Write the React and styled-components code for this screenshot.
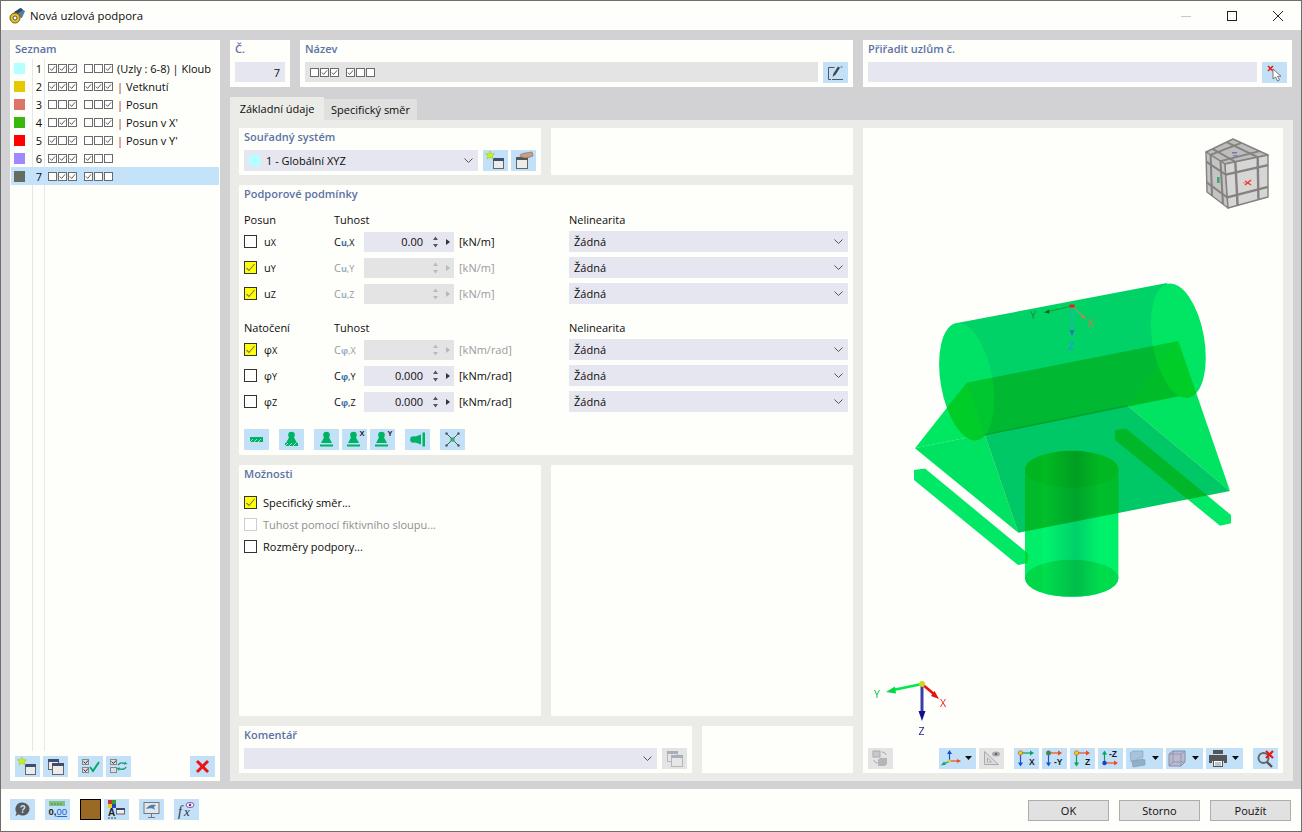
import React from "react";
import styled, { createGlobalStyle } from "styled-components";

const Global = createGlobalStyle`
  html, body { margin: 0; padding: 0; background: #fff; }
  body { font-family: "Open Sans", "Noto Sans", "Liberation Sans", sans-serif; font-size: 11px; color: #0c0c0c; }
  * { box-sizing: border-box; }
`;

const WHITE = "#fefefb";
const BTN = "#c2e1f8";

const Window = styled.div`
  width: 1302px; height: 832px; display: flex; flex-direction: column;
  border: 1px solid #6e6e6e; background: ${WHITE}; overflow: hidden;
`;
const TitleBar = styled.header`
  height: 29px; flex: none; display: flex; align-items: center; padding-left: 8px; gap: 4px;
  font-size: 11.4px; background: ${WHITE};
`;
const WindowControls = styled.div`
  margin-left: auto; display: flex; align-items: center; height: 100%;
`;
const WinCtl = styled.div`
  width: 46px; height: 100%; display: flex; align-items: center; justify-content: center;
`;
const Main = styled.main`
  flex: 1; min-height: 0; background: #d2d2d4; padding: 10px 8px 8px 9px;
  display: grid; grid-template-columns: 210px 1fr; gap: 10px;
`;
const ListPanel = styled.section`
  background: ${WHITE}; display: flex; flex-direction: column; padding: 0 1px 4px;
`;
const Heading = styled.h3`
  margin: 0; height: 19px; line-height: 17px; padding: 0 ${p => p.$pad ?? 5}px; font-size: 11px; font-weight: 600; color: #5c72a3; flex: none;
`;
const ListBody = styled.div`
  flex: 1; display: flex; flex-direction: column;
  background-image: linear-gradient(#e6e6e6, #e6e6e6), linear-gradient(#e6e6e6, #e6e6e6);
  background-size: 1px 100%, 1px 100%;
  background-position: 21px 0, 33px 0;
  background-repeat: no-repeat;
`;
const ListRow = styled.div`
  height: 18px; display: flex; align-items: center; padding-left: 3px; flex: none;
  background: ${p => (p.$selected ? "#c4e3fa" : "transparent")};
`;
const Swatch = styled.span`
  width: 11px; height: 11px; flex: none; background: ${p => p.$c};
`;
const RowNum = styled.span`
  width: 17px; text-align: right; margin-right: 6px; flex: none;
`;
const MiniGroup = styled.span`
  display: inline-flex; gap: 1px; margin-right: ${p => p.$mr ?? 7}px;
`;
const Mini = styled.span`
  width: 9px; height: 9px; border: 1px solid #6b6b6b; display: inline-flex; align-items: center; justify-content: center; background: #fff;
`;
const RowText = styled.span` white-space: nowrap; `;
const Pipe = styled.span` color: #a0142c; `;
const ListTools = styled.div`
  display: flex; gap: 10px; padding: 5px 4px 0 4px; flex: none;
`;
const Group = styled.div`
  display: flex; gap: ${p => p.$gap ?? 3}px; margin-left: ${p => (p.$push ? "auto" : "0")}; margin-right: ${p => (p.$pushRight ? "auto" : "0")};
`;
const Btn = styled.div`
  width: ${p => (p.$wide ? 37 : 25)}px; height: 21px; flex: none; background: ${p => (p.$off ? "#e4e4e4" : BTN)};
  display: flex; align-items: center;
  svg { opacity: ${p => (p.$dim ? 0.35 : 1)}; }
`;
const Right = styled.div` display: flex; flex-direction: column; min-width: 0; `;
const TopRow = styled.div`
  display: grid; grid-template-columns: 60px 553px 429px; gap: 10px; height: 47px; flex: none;
`;
const Panel = styled.section`
  background: ${WHITE}; min-width: 0; min-height: 0;
`;
const FieldRow = styled.div`
  display: flex; gap: 5px; padding: 3px 5px 0;
`;
const TextField = styled.div`
  flex: 1; height: 20px; background: ${p => (p.$off ? "#e4e4e4" : "#e6e6f1")}; display: flex; align-items: center;
  justify-content: ${p => (p.$right ? "flex-end" : "flex-start")}; padding: 0 5px;
`;
const Tabs = styled.div`
  margin-top: 10px; height: 23px; display: flex; align-items: flex-end; flex: none;
`;
const Tab = styled.div`
  height: ${p => (p.$active ? 23 : 21)}px; width: ${p => (p.$active ? 94 : 93)}px; display: flex; align-items: center; justify-content: center;
  background: ${p => (p.$active ? "#ebebe7" : "#e0e0e0")}; font-size: 11px;
`;
const TabBody = styled.div`
  flex: 1; min-height: 0; background: #ebebe7; padding: 8px 10px 8px 9px;
  display: grid; grid-template-columns: 302px 302px 420px; grid-template-rows: 47px 270px 251px 47px; gap: 10px;
`;
const ViewPanel = styled(Panel)`
  grid-column: 3; grid-row: 1 / -1; display: flex; flex-direction: column;
`;
const WidePanel = styled(Panel)` grid-column: 1 / 3; `;
const BottomSplit = styled.div`
  grid-column: 1 / 3; display: grid; grid-template-columns: 453px 151px; gap: 10px;
`;
const Select = styled.div`
  flex: ${p => (p.$fill ? 1 : "none")}; width: ${p => (p.$w ? p.$w + "px" : "auto")}; height: 21px; background: #e6e6f1; display: flex; align-items: center; padding: 0 5px; gap: 6px;
`;
const SelectLabel = styled.span` flex: 1; `;
const SysSwatch = styled.span`
  width: 11px; height: 11px; background: #b4ffff; flex: none;
`;
const CondBlock = styled.div`
  display: grid; grid-template-columns: 90px 30px 90px 115px 279px; grid-template-rows: 16px repeat(3, 26px); margin: ${p => p.$mt}px 0 0 5px;
`;
const CondHead = styled.div`
  height: 16px; line-height: 15px; grid-column: ${p => p.$col};
`;
const Cell = styled.div`
  display: flex; align-items: center; height: 21px; margin-top: 3px; gap: 7px;
  color: ${p => (p.$off ? "#9b9b9b" : "#0c0c0c")};
`;
const Box = styled.span`
  width: 13px; height: 13px; flex: none; border: 1px solid ${p => (p.$off ? "#cfcfcf" : "#333")};
  background: ${p => (p.$on ? "#ffff00" : "#fff")}; display: inline-flex; align-items: center; justify-content: center;
`;
const Sub = styled.span`
  font-size: 9px; line-height: 1;
  color: ${p => p.$c || "inherit"}; font-weight: ${p => (p.$b ? 700 : 400)};
`;
const Sym = styled.span` display: inline-flex; align-items: baseline; `;
const Num = styled.div`
  width: 90px; height: 20px; background: ${p => (p.$off ? "#e4e4e4" : "#e6e6f1")}; display: flex; align-items: center; justify-content: flex-end; padding-right: 4px; gap: 5px;
`;
const Unit = styled.span` padding-left: 5px; `;
const SupportTools = styled.div`
  display: flex; gap: 10px; margin: 15px 0 0 5px;
`;
const OptionList = styled.div`
  margin: 7px 0 0 5px;
`;
const Option = styled.div`
  height: 22px; display: flex; align-items: center; gap: 6px; color: ${p => (p.$off ? "#8f8f8f" : "#0c0c0c")};
`;
const Canvas = styled.svg`
  display: block; flex: none; isolation: isolate;
`;
const Mul = styled.g` mix-blend-mode: multiply; `;
const ViewTools = styled.div`
  display: flex; gap: 10px; padding: 5px 5px 0; justify-content: flex-end;
`;
const Footer = styled.footer`
  height: 42px; flex: none; display: flex; padding: 10px 10px 0 9px; background: ${WHITE}; gap: 10px;
`;
const ColorBox = styled.div`
  width: 21px; height: 21px; background: #9a6a25; border: 1px solid #000; flex: none;
`;
const Actions = styled.div`
  margin-left: auto; display: flex; gap: 10px; padding-top: 1px;
`;
const Action = styled.div`
  width: 81px; height: 21px; background: #e1e1e1; border: 1px solid #adadad; display: flex; align-items: center; justify-content: center; font-size: 11px;
`;

const Ic = ({ children }) => <svg width="25" height="21" viewBox="0 0 25 21" style={{ flex: "none" }}>{children}</svg>;
const Caret = () => <svg width="12" height="21" viewBox="0 0 12 21" style={{ flex: "none" }}><path d="M1 8h7l-3.500 4z" fill="#111" /></svg>;
const Tick = ({ s = 7, c = "#444" }) => <svg width={s} height={s} viewBox="0 0 8 8"><path d="M1 4l2 2.200L7 1.500" fill="none" stroke={c} strokeWidth="1" /></svg>;
const BigTick = () => <svg width="11" height="11" viewBox="0 0 11 11"><path d="M1.500 6l2.500 2.500L9.500 2" fill="none" stroke="#777" strokeWidth="1.100" /></svg>;
const Chevron = () => <svg width="9" height="5" viewBox="0 0 9 5" style={{ flex: "none" }}><path d="M.5.5l4 4 4-4" fill="none" stroke="#555" /></svg>;
const Spin = ({ off }) => {
  const c = off ? "#b9b9b9" : "#333";
  return <svg width="22" height="14" viewBox="0 0 22 14"><path d="M5 5l2.500-3.500L10 5zM5 9l2.500 3.500L10 9z" fill={off ? "#bbb" : "#555"} /><path d="M18 4l4 3-4 3z" fill={c} /></svg>;
};

const Win = ({ x = 10, y = 8, w = 10, h = 10, bar = "#3e4d70" }) => (
  <g><rect x={x + .5} y={y + .5} width={w} height={h} fill="#ececec" stroke="#666" /><rect x={x} y={y} width={w + 1} height="3" fill={bar} /></g>
);
const IconNew = () => <Ic><Win /><path d="M7 1l1.300 3 3.200-.3-2.300 2.200 1.200 3-3.400-1.600-3.100 1.700 1-3.200L2.500 3.600l3.200.2z" fill="#c9f21c" stroke="#9cbf10" strokeWidth=".5" /></Ic>;
const IconCopy = () => <Ic><Win x={5} y={3} w={10} h={10} /><Win x={9} y={7} w={11} h={11} /></Ic>;
const IconCheckAll = () => (
  <Ic>
    <rect x="4.500" y="3.500" width="6" height="5" fill="#ddd" stroke="#888" /><rect x="4.500" y="11.500" width="6" height="5" fill="#ddd" stroke="#888" />
    <path d="M5.500 5.500l2 2 2.500-3M5.500 13.500l2 2 2.500-3" fill="none" stroke="#333" />
    <path d="M12 11l3 4 6-9" fill="none" stroke="#0aa868" strokeWidth="2" />
  </Ic>
);
const IconCheckSwap = () => (
  <Ic>
    <rect x="4.500" y="3.500" width="6" height="5" fill="#ddd" stroke="#888" /><rect x="4.500" y="11.500" width="6" height="5" fill="#ddd" stroke="#888" />
    <path d="M5.500 5.500l2 2 2.500-3" fill="none" stroke="#333" />
    <path d="M12 9c2-2.500 5-2.500 7-1M20 11c-1 2.500-5 3-7 1.500" fill="none" stroke="#1c9e6b" strokeWidth="1.500" />
    <path d="M19 5.500l2.500 2.500-3.500.5zM13 15l-2.500-3 3.500-.5z" fill="#1c9e6b" />
  </Ic>
);
const IconDel = () => <Ic><path d="M7 5l11 11M18 5L7 16" stroke="#ee1414" strokeWidth="3" /></Ic>;
const IconEdit = () => (
  <Ic>
    <path d="M11.500 5.500H5.500V17.500H8M9 17.500H20" fill="none" stroke="#555" />
    <path d="M9.500 15l1-3.500 4.500-7 2 1.300-4.500 7z" fill="#444" />
    <path d="M17.500 5h2" stroke="#666" />
  </Ic>
);
const IconPick = () => (
  <Ic>
    <path d="M6 4l5 5M11 4l-5 5" stroke="#ee2020" strokeWidth="1.600" />
    <path d="M11 7v10l2.500-2 2 4 2-1-2-3.800h3.500z" fill="#fff" stroke="#777" />
  </Ic>
);
const IconHand = () => (
  <Ic>
    <Win x={5} y={7} w={11} h={11} bar="#555" />
    <path d="M9 5c3-2.500 7-2 12-3l1 4c-3 1-5 2-7 2-3 0-6-1-6-3z" fill="#c99d82" stroke="#6f5b50" strokeWidth=".5" />
  </Ic>
);
const G = "#00b265";
const Pin = ({ dx = 0 }) => (
  <g transform={`translate(${dx} 0)`}><circle cx="12.500" cy="6" r="3.300" fill={G} /><path d="M10.500 7.500h4l3.500 6.500H7z" fill={G} /></g>
);
const Hatch = ({ x = 6, y = 15, w = 13 }) => (
  <g><rect x={x} y={y} width={w} height="3" fill={G} /><path d={`M${x} ${y + 3}l3-3M${x + 4} ${y + 3}l3-3M${x + 8} ${y + 3}l3-3`} stroke="#bff0d8" strokeWidth=".8" /></g>
);
const IconS1 = () => <Ic><rect x="6" y="8" width="13" height="2.500" fill={G} /><Hatch y={10} /></Ic>;
const IconS2 = () => <Ic><Pin /><Hatch y={14} /></Ic>;
const IconS3 = () => <Ic><Pin /><rect x="6" y="15.500" width="13" height="2" fill={G} /></Ic>;
const AxisSup = ({ t }) => <text x="17.500" y="7" fontSize="7.500" fontWeight="700" fontFamily="Liberation Sans" fill="#222">{t}</text>;
const IconS4 = () => <Ic><Pin dx={-1} /><rect x="5" y="15.500" width="13" height="2" fill={G} /><AxisSup t="X" /></Ic>;
const IconS5 = () => <Ic><Pin dx={-1} /><rect x="5" y="15.500" width="13" height="2" fill={G} /><AxisSup t="Y" /></Ic>;
const IconS6 = () => <Ic><rect x="17.500" y="3.500" width="2.500" height="14" fill={G} /><circle cx="8.500" cy="10.500" r="3.300" fill={G} /><path d="M9 8l7-2.500v10L9 13z" fill={G} /></Ic>;
const IconS7 = () => (
  <Ic>
    <path d="M7 5l11 11M18 5L7 16" stroke="#555" />
    {[[6.500, 4.500], [18.500, 4.500], [6.500, 16.500], [18.500, 16.500]].map(([x, y]) => <circle key={x + "-" + y} cx={x} cy={y} r="1.200" fill="#555" />)}
    <rect x="10.500" y="8.500" width="4" height="4" fill="#3aa860" />
  </Ic>
);
const IconHelp = () => (
  <Ic>
    <path d="M12.500 3.500a7 6.500 0 1 1-4 11.800l-3 2 1-3.800a6.500 6.500 0 0 1 6-10z" fill="#5a5a5a" />
    <text x="12.700" y="14" textAnchor="middle" fontSize="10" fontWeight="700" fontFamily="Liberation Sans" fill="#c2e1f8">?</text>
  </Ic>
);
const IconRuler = () => (
  <Ic>
    <rect x="4" y="2" width="16" height="5" fill="#7fc27f" />
    <path d="M7 4v2M10 4v2M13 4v2M16 4v2" stroke="#4b8f4b" />
    <text x="3.500" y="16" fontSize="9.500" fontWeight="700" fontFamily="Liberation Sans" fill="#222">0,</text>
    <text x="11.500" y="16" fontSize="9.500" fontFamily="Liberation Sans" fill="#2060d0" textDecoration="underline">00</text>
  </Ic>
);
const IconColorA = () => (
  <Ic>
    <rect x="4" y="1" width="4" height="4" fill="#d03030" /><rect x="8" y="1" width="4" height="4" fill="#30a030" /><rect x="4" y="5" width="4" height="4" fill="#e0d020" /><rect x="8" y="5" width="4" height="4" fill="#3040c0" />
    <text x="4" y="17" fontSize="10" fontWeight="700" fontFamily="Liberation Sans" fill="#222">A</text>
    <rect x="12.500" y="9.500" width="8" height="5.500" fill="#eee" stroke="#666" /><rect x="12" y="9" width="9" height="2" fill="#446" />
    <path d="M4 19h8" stroke="#444" strokeDasharray="2 1" />
  </Ic>
);
const IconMonitor = () => (
  <Ic>
    <rect x="5" y="3.500" width="15" height="11" fill="#dfe8ef" stroke="#777" />
    <path d="M7 10c2-4 6-5 10-4l-2 2 1 3c-2-2-5-2-9-1z" fill="#4d7fa8" />
    <path d="M12.500 15v3M9 18.500h7" stroke="#777" />
  </Ic>
);
const IconFx = () => (
  <Ic>
    <text x="4" y="17" fontSize="14" fontStyle="italic" fontFamily="Liberation Serif" fill="#333">f</text>
    <text x="10" y="17" fontSize="13" fontStyle="italic" fontFamily="Liberation Serif" fill="#333">x</text>
    <ellipse cx="16" cy="6" rx="4" ry="2.500" fill="#fff" stroke="#8a4fa0" /><circle cx="16" cy="6" r="1.300" fill="#5a3a90" />
  </Ic>
);
const Arrow = ({ d, c, head }) => <g><path d={d} stroke={c} fill="none" strokeWidth="1.200" /><path d={head} fill={c} /></g>;
const IconSwap = () => (
  <Ic>
    <rect x="5" y="3" width="7" height="6" fill="#c8c8c8" stroke="#aaa" /><path d="M14 4c3 0 4 2 4 3M10 15c-3 0-4-2-4-3" fill="none" stroke="#aaa" />
    <path d="M12 10h7v6l-2 2h-7v-6z" fill="#b5b5b5" />
  </Ic>
);
const IconAxes = () => (
  <Ic>
    <Arrow d="M10.500 13V5" c="#1a4fd0" head="M10.500 2l2.500 4h-5z" />
    <Arrow d="M10.500 13H19" c="#ef4a18" head="M22 13l-4 2v-4z" />
    <Arrow d="M10.500 13L5 16" c="#10a060" head="M2 17.500l3-4 2 3z" />
    <circle cx="10.500" cy="13" r="1.600" fill="#e2d21c" />
  </Ic>
);
const IconSquare = () => (
  <Ic>
    <path d="M5.500 3.500v13h14z" fill="#dcdcdc" stroke="#aaa" /><path d="M8.500 10v4h4z" fill="#eee" stroke="#aaa" />
    <ellipse cx="17" cy="6" rx="4" ry="2.500" fill="#aaa" /><circle cx="17" cy="6" r="1.300" fill="#666" />
  </Ic>
);
const Lab = ({ x, y, t }) => <text x={x} y={y} fontSize="8.500" fontWeight="700" fontFamily="Liberation Sans" fill="#1a1a1a">{t}</text>;
const IconView = ({ o, h, v, t, tx = 15 }) => (
  <Ic>
    <Arrow d="M6.500 5H17" c={h} head="M20 5l-4 2.500v-5z" />
    <Arrow d="M6.500 5v10" c={v} head="M6.500 18.500l-2.500-4h5z" />
    <circle cx="6.500" cy="5" r="2.200" fill={o} stroke="#d04020" strokeWidth=".6" />
    <Lab x={tx} y={17} t={t} />
  </Ic>
);
const IconViewZ = () => (
  <Ic>
    <Arrow d="M6.500 15V6" c="#07a25a" head="M6.500 2.500l2.500 4h-5z" />
    <Arrow d="M6.500 15H17" c="#ef4a18" head="M20 15l-4 2.500v-5z" />
    <circle cx="6.500" cy="15" r="2.200" fill="#1a3fd0" />
    <Lab x={11} y={9} t="-Z" />
  </Ic>
);
const IconBoxes = () => (
  <Ic>
    <path d="M4 5l3-2h10v6l-2 1H12v3l-7 .5z" fill="#a9c2d8" stroke="#7f9ab0" strokeWidth=".6" />
    <path d="M6 13l11-2 2 1v5l-12 2z" fill="#8fb0c8" stroke="#7f9ab0" strokeWidth=".6" />
  </Ic>
);
const IconCube = () => (
  <Ic>
    <path d="M3 6l4-3h12v11l-4 4H3z" fill="#b9b9d0" stroke="#8a8aa0" /><path d="M3 6h12v12M15 6l4-3M3 18l4-4h12M7 3v11" fill="none" stroke="#8a8aa0" strokeWidth=".7" />
  </Ic>
);
const IconPrint = () => (
  <Ic>
    <rect x="7" y="2" width="10" height="4" fill="#555" />
    <path d="M3 7h18v8h-3v-2H6v2H3z" fill="#555" />
    <rect x="7.500" y="12.500" width="9" height="6" fill="#fff" stroke="#555" /><path d="M9 15h6M9 17h6" stroke="#555" strokeWidth=".7" />
  </Ic>
);
const IconZoomX = () => (
  <Ic>
    <circle cx="10.500" cy="10" r="5" fill="none" stroke="#666" strokeWidth="2" /><path d="M14 14l5 5" stroke="#555" strokeWidth="2.400" />
    <path d="M13 3l7 7M20 3l-7 7" stroke="#ee1414" strokeWidth="2.200" />
  </Ic>
);

const Minis = ({ code }) => (
  <>
    {code.split(" ").map((g, i, a) => (
      <MiniGroup key={i} $mr={i === a.length - 1 ? 4 : 7}>
        {g.split("").map((b, j) => <Mini key={j}>{b === "1" && <Tick />}</Mini>)}
      </MiniGroup>
    ))}
  </>
);

const rows = [
  { c: "#b4ffff", code: "111 001", text: "(Uzly : 6-8) | Kloub" },
  { c: "#e6c800", code: "111 111", pipe: true, text: "Vetknutí" },
  { c: "#dc7468", code: "001 001", pipe: true, text: "Posun" },
  { c: "#38b80a", code: "011 001", pipe: true, text: "Posun v X'" },
  { c: "#ff0000", code: "101 001", pipe: true, text: "Posun v Y'" },
  { c: "#a088ff", code: "111 100", text: "" },
  { c: "#646e60", code: "011 100", text: "", sel: true },
];

const translation = [
  { s: "u", a: "X", u: false, v: "0.00", unit: "[kN/m]" },
  { s: "u", a: "Y", u: true, v: "", unit: "[kN/m]" },
  { s: "u", a: "Z", u: true, v: "", unit: "[kN/m]" },
];
const rotation = [
  { s: "φ", a: "X", u: true, v: "", unit: "[kNm/rad]" },
  { s: "φ", a: "Y", u: false, v: "0.000", unit: "[kNm/rad]" },
  { s: "φ", a: "Z", u: false, v: "0.000", unit: "[kNm/rad]" },
];

const CondRows = ({ title, data }) => (
  <>
    <CondHead $col="1">{title}</CondHead>
    <CondHead $col="2 / 4">Tuhost</CondHead>
    <CondHead $col="5">Nelinearita</CondHead>
    {data.map(r => (
      <React.Fragment key={r.s + r.a}>
        <Cell>
          <Box $on={r.u}>{r.u && <BigTick />}</Box>
          <Sym>{r.s}<Sub>{r.a}</Sub></Sym>
        </Cell>
        <Cell $off={r.u}><Sym>C<Sub $b $c={r.u ? "#9bb0c8" : "#3a6ea8"}>{r.s}</Sub><Sub>,{r.a}</Sub></Sym></Cell>
        <Cell><Num $off={r.u}>{r.v}<Spin off={r.u} /></Num></Cell>
        <Cell $off={r.u}><Unit>{r.unit}</Unit></Cell>
        <Cell><Select $w={279}><SelectLabel>Žádná</SelectLabel><Chevron /></Select></Cell>
      </React.Fragment>
    ))}
  </>
);

/* bilinear point on a quad: corners a(0,0) b(1,0) c(1,1) d(0,1) */
const at = ([a, b, c, d], u, v) => {
  const mix = (p, q, t) => [p[0] + (q[0] - p[0]) * t, p[1] + (q[1] - p[1]) * t];
  return mix(mix(a, b, u), mix(d, c, u), v);
};
const CubeFace = ({ q, fill, sw = 2.4 }) => (
  <g>
    <polygon points={q.map(p => p.join(",")).join(" ")} fill={fill} stroke="#85817f" strokeWidth="1.400" strokeLinejoin="round" />
    {[.24, .76].map(t => {
      const [p1, p2] = [at(q, t, 0), at(q, t, 1)];
      const [p3, p4] = [at(q, 0, t), at(q, 1, t)];
      return (
        <g key={t} stroke="#85817f" strokeWidth={sw}>
          <line x1={p1[0]} y1={p1[1]} x2={p2[0]} y2={p2[1]} />
          <line x1={p3[0]} y1={p3[1]} x2={p4[0]} y2={p4[1]} />
        </g>
      );
    })}
  </g>
);

const Scene = () => (
  <Canvas width="420" height="615" viewBox="863 128 420 615">
    <defs>
      <linearGradient id="col" x1="0" x2="1" y1="0" y2="0">
        <stop offset="0" stopColor="#00ee68" /><stop offset=".18" stopColor="#00ee68" /><stop offset=".2" stopColor="#00f56e" />
        <stop offset=".55" stopColor="#00d06a" /><stop offset=".8" stopColor="#00f26c" /><stop offset="1" stopColor="#00f068" />
      </linearGradient>
    </defs>
    {/* cylinder */}
    <path d="M957 323L1167 283L1190 394L977 437Z" fill="#00d268" />
    <ellipse cx="966.700" cy="381.700" rx="26" ry="59.500" transform="rotate(-10 966.700 381.700)" fill="#00e266" />
    <ellipse cx="1178.300" cy="340.800" rx="26" ry="58" transform="rotate(-10 1178.300 340.800)" fill="#00e664" />
    {/* rails */}
    <Mul>
      <path d="M914 470L925 468.500L1028 553.500V563L1018 565L914 480Z" fill="#00e866" />
      <path d="M1115 430L1126 428.500L1231 515V523.300L1220 525.700L1115 440Z" fill="#00e866" />
    </Mul>
    {/* wedge: each region of the overlapping planes */}
    <Mul><path d="M915 448.300L984.500 434L1018.300 532.700Z" fill="#00e262" /></Mul>
    <Mul><path d="M984.500 434L1126.700 405L1230 491L1018.300 532.700Z" fill="#00c866" /></Mul>
    <Mul><path d="M1126.700 405L1178.300 341L1230 491Z" fill="#00e462" /></Mul>
    <Mul><path d="M966.700 382.700L1178.300 341L1126.700 405L984.500 434Z" fill="#00e078" /></Mul>
    <Mul><path d="M915 448.300L966.700 382.700L984.500 434Z" fill="#00e862" /></Mul>
    {/* column */}
    <Mul>
      <path d="M1025 469.300A46.700 18.500 0 0 1 1118.400 469.300V578.300A46.700 18.500 0 0 1 1025 578.300Z" fill="url(#col)" />
    </Mul>
    <Mul><ellipse cx="1071.700" cy="469.300" rx="46.700" ry="18.500" fill="#00f8c0" /></Mul>
    <Mul><ellipse cx="1071.700" cy="578.300" rx="46.700" ry="18.500" fill="#00e8b4" /></Mul>
    {/* local axes */}
    <g fontFamily="Open Sans" fontSize="11">
      <path d="M1072 306L1048 311.500" stroke="#1f9a1f" />
      <path d="M1044 312.500l5-3 .5 4z" fill="#0c6c0c" />
      <text x="1030" y="319" fill="#1c8c2c">Y</text>
      <path d="M1072 306L1084 317" stroke="#f07a60" />
      <path d="M1086 319l-5-1.500 2.500-3z" fill="#d8765a" />
      <text x="1087.500" y="327" fill="#f06a50">X</text>
      <path d="M1072 306V332" stroke="#38a0e8" />
      <path d="M1072 336l-2.500-6h5z" fill="#2878b8" />
      <text x="1068" y="350" fill="#2890ff">Z</text>
      <rect x="1069.500" y="304.500" width="5" height="3" fill="#e82010" />
    </g>
    {/* view cube */}
    <CubeFace q={[[1206, 152], [1233, 139], [1268, 155], [1225, 164]]} fill="#bdbdbd" sw={1.800} />
    <CubeFace q={[[1206, 152], [1225, 164], [1228, 208], [1207, 192]]} fill="#c4c4c4" sw={2} />
    <CubeFace q={[[1225, 164], [1268, 155], [1268, 197], [1228, 208]]} fill="#d6d6d6" sw={2.400} />
    <path d="M1245 181l6 4M1251 180l-6 5" stroke="#f03a2a" strokeWidth="1.500" />
    <path d="M1246 183h-3" stroke="#f08a7a" />
    <rect x="1217" y="177" width="2.500" height="6" fill="#3aa870" />
    <rect x="1232" y="152" width="5" height="1.500" fill="#7878a8" /><rect x="1233" y="155" width="5" height="1.500" fill="#8888a8" />
    {/* global axes */}
    <g fontFamily="Open Sans" fontSize="10.500">
      <path d="M922 684L893 690" stroke="#00e84c" strokeWidth="2.600" />
      <path d="M886 692l9-5.500 1 7z" fill="#00d840" />
      <text x="874" y="698" fill="#00c040">Y</text>
      <path d="M922 684L935 695" stroke="#ee1010" strokeWidth="2.600" />
      <path d="M939 699l-8-3 3.500-5z" fill="#e81010" />
      <text x="940" y="707" fill="#f01818">X</text>
      <path d="M922 684V712" stroke="#3c3ca8" strokeWidth="3" />
      <path d="M922 721l-3.500-10h7z" fill="#10108a" />
      <text x="918.500" y="735" fill="#20209a">Z</text>
      <circle cx="922" cy="684" r="3" fill="#c8d820" />
    </g>
  </Canvas>
);

export default function App() {
  return (
    <>
      <Global />
      <Window>
        <TitleBar>
          <svg width="17" height="17" viewBox="0 0 17 17">
            <path d="M2 8l9-7 5 3-3 7z" fill="#5a7a9a" />
            <path d="M5 5l7-4 2 2-6 4z" fill="#2a4a6a" />
            <circle cx="6" cy="11" r="5" fill="#e8c020" stroke="#6a5a20" />
            <circle cx="6" cy="11" r="2" fill="#fff" stroke="#555" />
          </svg>
          Nová uzlová podpora
          <WindowControls>
            <WinCtl><svg width="10" height="10" viewBox="0 0 10 10"><path d="M0 5.500h10" stroke="#c8c8c8" /></svg></WinCtl>
            <WinCtl><svg width="10" height="10" viewBox="0 0 10 10"><rect x=".5" y=".5" width="9" height="9" fill="none" stroke="#222" /></svg></WinCtl>
            <WinCtl><svg width="10" height="10" viewBox="0 0 10 10"><path d="M0 0l10 10M10 0L0 10" stroke="#222" /></svg></WinCtl>
          </WindowControls>
        </TitleBar>
        <Main>
          <ListPanel>
            <Heading $pad={4}>Seznam</Heading>
            <ListBody>
              {rows.map((r, i) => (
                <ListRow key={i} $selected={r.sel}>
                  <Swatch $c={r.c} />
                  <RowNum>{i + 1}</RowNum>
                  <Minis code={r.code} />
                  <RowText>{r.pipe && <Pipe>| </Pipe>}{r.text}</RowText>
                </ListRow>
              ))}
            </ListBody>
            <ListTools>
              <Group><Btn><IconNew /></Btn><Btn><IconCopy /></Btn></Group>
              <Group><Btn><IconCheckAll /></Btn><Btn><IconCheckSwap /></Btn></Group>
              <Group $push><Btn><IconDel /></Btn></Group>
            </ListTools>
          </ListPanel>
          <Right>
            <TopRow>
              <Panel>
                <Heading>Č.</Heading>
                <FieldRow><TextField $right>7</TextField></FieldRow>
              </Panel>
              <Panel>
                <Heading>Název</Heading>
                <FieldRow>
                  <TextField $off><Minis code="011 100" /></TextField>
                  <Btn><IconEdit /></Btn>
                </FieldRow>
              </Panel>
              <Panel>
                <Heading>Přiřadit uzlům č.</Heading>
                <FieldRow>
                  <TextField />
                  <Btn><IconPick /></Btn>
                </FieldRow>
              </Panel>
            </TopRow>
            <Tabs>
              <Tab $active>Základní údaje</Tab>
              <Tab>Specifický směr</Tab>
            </Tabs>
            <TabBody>
              <Panel>
                <Heading>Souřadný systém</Heading>
                <FieldRow>
                  <Select $fill><SysSwatch /><SelectLabel>1 - Globální XYZ</SelectLabel><Chevron /></Select>
                  <Group><Btn><IconNew /></Btn><Btn><IconHand /></Btn></Group>
                </FieldRow>
              </Panel>
              <Panel />
              <ViewPanel>
                <Scene />
                <ViewTools>
                  <Group $pushRight><Btn $off><IconSwap /></Btn></Group>
                  <Group>
                    <Btn $wide><IconAxes /><Caret /></Btn>
                    <Btn $off><IconSquare /></Btn>
                  </Group>
                  <Group>
                    <Btn><IconView o="#e8d020" h="#07a25a" v="#1a4fd0" t="X" /></Btn>
                    <Btn><IconView o="#07a25a" h="#ef4a18" v="#1a4fd0" t="-Y" tx={12} /></Btn>
                    <Btn><IconView o="#e8d020" h="#ef4a18" v="#07a25a" t="Z" /></Btn>
                    <Btn><IconViewZ /></Btn>
                    <Btn $wide><IconBoxes /><Caret /></Btn>
                    <Btn $wide><IconCube /><Caret /></Btn>
                    <Btn $wide><IconPrint /><Caret /></Btn>
                  </Group>
                  <Btn><IconZoomX /></Btn>
                </ViewTools>
              </ViewPanel>
              <WidePanel>
                <Heading>Podporové podmínky</Heading>
                <CondBlock $mt={8}><CondRows title="Posun" data={translation} /></CondBlock>
                <CondBlock $mt={14}><CondRows title="Natočení" data={rotation} /></CondBlock>
                <SupportTools>
                  <Btn><IconS1 /></Btn>
                  <Btn><IconS2 /></Btn>
                  <Group>
                    <Btn><IconS3 /></Btn>
                    <Btn><IconS4 /></Btn>
                    <Btn><IconS5 /></Btn>
                  </Group>
                  <Btn><IconS6 /></Btn>
                  <Btn><IconS7 /></Btn>
                </SupportTools>
              </WidePanel>
              <Panel>
                <Heading>Možnosti</Heading>
                <OptionList>
                  <Option><Box $on><BigTick /></Box>Specifický směr...</Option>
                  <Option $off><Box $off />Tuhost pomocí fiktivního sloupu...</Option>
                  <Option><Box />Rozměry podpory...</Option>
                </OptionList>
              </Panel>
              <Panel />
              <BottomSplit>
                <Panel>
                  <Heading>Komentář</Heading>
                  <FieldRow>
                    <Select $fill><SelectLabel /><Chevron /></Select>
                    <Btn $off $dim><IconCopy /></Btn>
                  </FieldRow>
                </Panel>
                <Panel />
              </BottomSplit>
            </TabBody>
          </Right>
        </Main>
        <Footer>
          <Btn><IconHelp /></Btn>
          <Btn><IconRuler /></Btn>
          <Group><ColorBox /><Btn><IconColorA /></Btn></Group>
          <Btn><IconMonitor /></Btn>
          <Btn><IconFx /></Btn>
          <Actions>
            <Action>OK</Action>
            <Action>Storno</Action>
            <Action>Použít</Action>
          </Actions>
        </Footer>
      </Window>
    </>
  );
}
